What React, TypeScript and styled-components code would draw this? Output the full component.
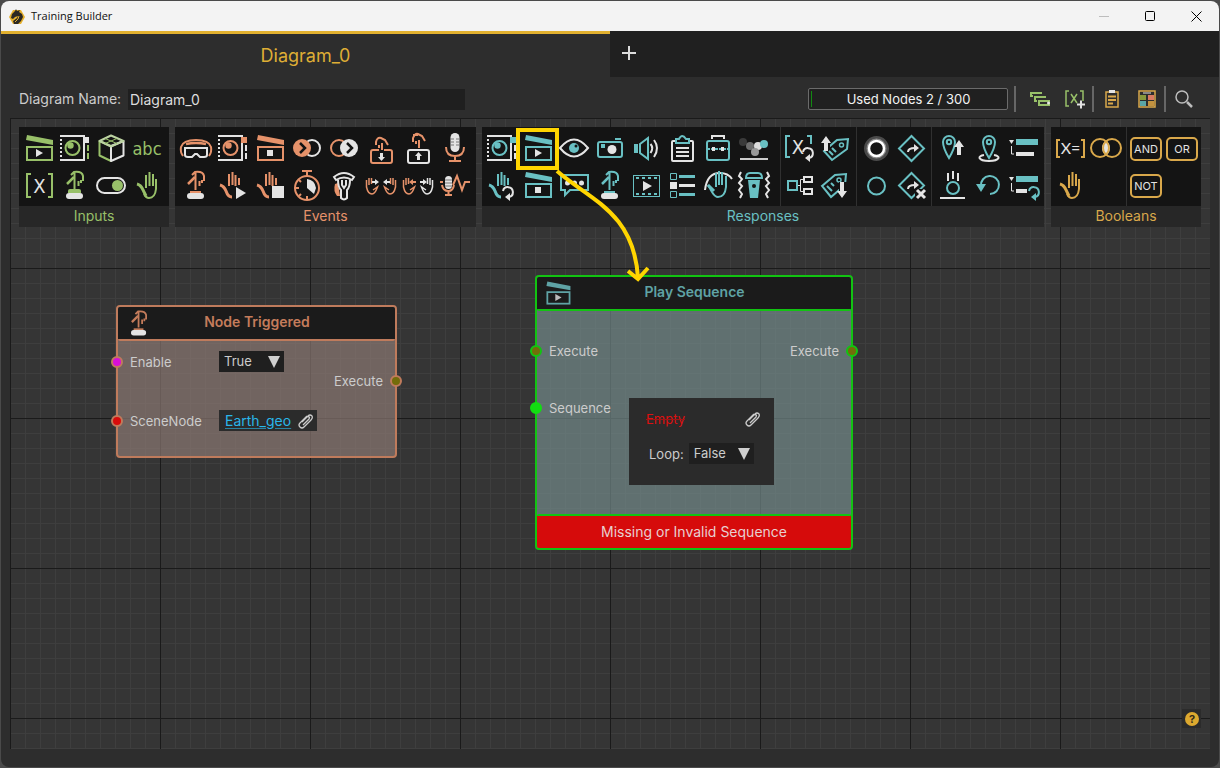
import React from "react";
import styled, { createGlobalStyle } from "styled-components";

const GREEN = "#98c069";
const ORANGE = "#e6926a";
const TEAL = "#69c0c3";
const GOLD = "#d9a84b";
const WHITE = "#e4e4e4";
const INK = "#141414";

const GlobalStyle = createGlobalStyle`
  * { box-sizing: border-box; }
  body {
    margin: 0;
    background: #4a4a4a;
    font-family: Inter, "Open Sans", sans-serif;
    font-size: 13px;
    line-height: 20px;
    color: #cccccc;
  }
  button, input, select { font: inherit; color: inherit; }
`;

const Window = styled.div`
  display: flex;
  flex-direction: column;
  min-height: calc(100vh - 2px);
  margin: 1px;
  background: #2d2d2d;
  border-radius: 8px;
  overflow: hidden;
`;

const TitleBar = styled.header`
  display: flex;
  align-items: center;
  height: 30px;
  padding-left: 8px;
  background: #f3f3f3;
  color: #111111;
`;

const AppTitle = styled.h1`
  flex: 1;
  margin: 0 0 0 6px;
  font: 400 11px/16px "Open Sans", "Noto Sans", sans-serif;
`;

const WindowButton = styled.button<{ $dim?: boolean }>`
  display: grid;
  place-items: center;
  width: 46px;
  height: 30px;
  padding: 0;
  border: 0;
  background: none;
  color: ${(p) => (p.$dim ? "#bdbdbd" : "#000000")};
`;

const TabBar = styled.nav`
  display: flex;
  height: 46px;
  background: #202020;
`;

const Tab = styled.button`
  flex: 0 0 50%;
  padding: 0;
  border: 0;
  border-top: 3px solid #e2b12f;
  background: #2d2d2d;
  color: #dfae35;
  font-size: 18px;
  line-height: 24px;
`;

const AddTab = styled.button`
  display: grid;
  place-items: center;
  width: 38px;
  height: 44px;
  padding: 0;
  border: 0;
  background: none;
  color: #dcdcdc;
`;

const Toolbar = styled.div`
  display: flex;
  align-items: center;
  height: 41px;
  padding: 3px 20px 0 18px;
`;

const NameField = styled.label`
  display: flex;
  align-items: center;
  gap: 7px;
  flex: 0 1 446px;
  font-size: 14px;
`;

const NameCaption = styled.span`
  width: 102px;
  white-space: nowrap;
`;

const NameInput = styled.input`
  flex: 1;
  min-width: 0;
  height: 21px;
  padding: 0 2px;
  border: 0;
  background: #1f1f1f;
  color: #dddddd;
`;

const Usage = styled.div`
  width: 200px;
  height: 22px;
  margin-left: auto;
  padding: 2px;
  border: 1px solid #6b6b6b;
  border-radius: 2px;
  background: #202020;
`;

const UsageFill = styled.div`
  height: 16px;
  border-left: 1px solid #128a12;
  color: #f2f2f2;
  line-height: 17px;
  text-align: center;
`;

const Divider = styled.span<{ $lead?: boolean }>`
  width: 2px;
  height: 26px;
  margin: ${(p) => (p.$lead ? "0 8px 0 6px" : "0 2px")};
  background: #666666;
`;

const Tools = styled.div`
  display: flex;
  align-items: center;
`;

const ToolButton = styled.button`
  display: grid;
  place-items: center;
  width: 31px;
  height: 26px;
  padding: 0;
  border: 0;
  background: none;
`;

const ToolPair = styled.div`
  display: flex;
  gap: 4px;
`;

const Canvas = styled.main`
  position: relative;
  flex: 1;
  margin: 0 9px 18px;
  min-height: 500px;
  background-color: #353535;
  background-image:
    linear-gradient(#1a1a1a 1px, transparent 1px),
    linear-gradient(90deg, #1a1a1a 1px, transparent 1px),
    linear-gradient(#3e3e3e 1px, transparent 1px),
    linear-gradient(90deg, #3e3e3e 1px, transparent 1px);
  background-size: 150px 150px, 150px 150px, 15px 15px, 15px 15px;
`;

const Palette = styled.div`
  display: flex;
  flex-wrap: wrap;
  gap: 6px;
  padding: 9px;
  > :last-child { margin-left: auto; }
`;

const Group = styled.section`
  background: #272727;
`;

const GroupBody = styled.div`
  display: flex;
  height: 79px;
  background: ${INK};
`;

const GroupName = styled.h2<{ $color: string }>`
  margin: 0;
  padding-bottom: 2px;
  color: ${(p) => p.$color};
  font-size: 14px;
  font-weight: 400;
  line-height: 19px;
  text-align: center;
`;

const Cells = styled.div<{ $columns: number; $width: number; $inset: number; $gap?: number; $ruled?: boolean }>`
  display: grid;
  grid-template-columns: repeat(${(p) => p.$columns}, 36px);
  grid-auto-rows: 36px;
  gap: 1px ${(p) => p.$gap ?? 0}px;
  width: ${(p) => p.$width}px;
  padding: 3px 0 0 ${(p) => p.$inset}px;
  border-left: ${(p) => (p.$ruled ? "1px solid #303030" : "0")};
`;

const IconButton = styled.button`
  width: 36px;
  height: 36px;
  padding: 0;
  border: 0;
  background: none;
  svg { display: block; }
`;

const Node = styled.article<{ $x: number; $y: number; $width: number; $edge: string; $fill: string }>`
  position: absolute;
  left: ${(p) => p.$x}px;
  top: ${(p) => p.$y}px;
  width: ${(p) => p.$width}px;
  border: 2px solid ${(p) => p.$edge};
  border-radius: 4px;
  background: ${(p) => p.$fill};
`;

const NodeHeader = styled.header<{ $edge: string; $color: string }>`
  display: grid;
  grid-template-columns: 34px 1fr 38px;
  align-items: center;
  height: 34px;
  padding-left: 5px;
  border-bottom: 2px solid ${(p) => p.$edge};
  border-radius: 2px;
  background: #1b1b1b;
  color: ${(p) => p.$color};
`;

const NodeTitle = styled.h3`
  margin: 0;
  padding-bottom: 2px;
  font-size: 14px;
  font-weight: 600;
  text-align: center;
`;

const NodeBody = styled.div<{ $height: number }>`
  display: flex;
  justify-content: space-between;
  height: ${(p) => p.$height}px;
`;

const PortList = styled.div<{ $top: number; $gap?: number }>`
  display: flex;
  flex-direction: column;
  gap: ${(p) => p.$gap ?? 0}px;
  padding-top: ${(p) => p.$top}px;
`;

const PortRow = styled.div<{ $out?: boolean }>`
  display: flex;
  align-items: flex-start;
  height: 22px;
  margin: ${(p) => (p.$out ? "0 -7px 0 0" : "0 0 0 -7px")};
`;

const Port = styled.span<{ $color: string; $edge: string }>`
  width: 12px;
  height: 12px;
  margin: 5px 0;
  border: 2px solid ${(p) => p.$edge};
  border-radius: 50%;
  background: ${(p) => p.$color};
`;

const PortName = styled.span<{ $width?: number }>`
  width: ${(p) => (p.$width ? `${p.$width}px` : "auto")};
  margin: 0 7px;
  line-height: 22px;
`;

const SelectBox = styled.span`
  display: grid;
  width: 65px;
  height: 21px;
  background: #1f1f1f;
  > * { grid-area: 1 / 1; }
  svg {
    align-self: center;
    justify-self: end;
    margin-right: 4px;
    pointer-events: none;
  }
`;

const Select = styled.select`
  appearance: none;
  width: 65px;
  height: 21px;
  padding: 0 5px;
  border: 0;
  background: none;
  line-height: 21px;
`;

const Reference = styled.span`
  display: flex;
  align-items: center;
  gap: 6px;
  height: 21px;
  padding: 0 2px 0 6px;
  background: #2b2b2b;
`;

const SceneLink = styled.a`
  color: #29b6ea;
  font-size: 14px;
  text-decoration: underline #2a82a0;
  text-underline-offset: 2px;
`;

const SequenceCard = styled.div`
  display: flex;
  flex-direction: column;
  gap: 14px;
  width: 145px;
  height: 87px;
  margin-top: 1px;
  padding: 10px 12px 0 17px;
  background: #2b2b2b;
`;

const CardRow = styled.div`
  display: flex;
  align-items: center;
  justify-content: space-between;
  height: 21px;
`;

const LoopField = styled.label`
  display: flex;
  align-items: center;
  gap: 5px;
  padding-left: 3px;
`;

const Missing = styled.s`
  color: #de1010;
  text-decoration-color: #a01414;
  text-decoration-thickness: 1px;
`;

const ErrorBar = styled.footer<{ $edge: string }>`
  height: 34px;
  border-top: 2px solid ${(p) => p.$edge};
  border-radius: 2px;
  background: #d60b0b;
  color: #e8d0d0;
  font-size: 14px;
  line-height: 31px;
  text-align: center;
`;

const ClipButton = styled.button`
  display: grid;
  place-items: center;
  width: 18px;
  height: 18px;
  padding: 0;
  border: 0;
  background: none;
`;

const Annotation = styled.svg`
  position: absolute;
  left: 0;
  top: 0;
  pointer-events: none;
`;

const HelpButton = styled.button`
  position: absolute;
  right: 9px;
  bottom: 21px;
  display: grid;
  place-items: center;
  width: 19px;
  height: 19px;
  padding: 0;
  border: 0;
  background: #2b2b2b;
`;

/* ---- icon drawings, all on a 36 x 36 board ---- */

type Tint = { c: string };

const Board = ({ children, size = 36 }: { children: React.ReactNode; size?: number }) => (
  <svg width={size} height={size} viewBox="0 0 36 36" fill="none" strokeWidth="2" aria-hidden="true">
    {children}
  </svg>
);

const GLYPH = '"DejaVu Sans Condensed", "DejaVu Sans", sans-serif';

const Clapper = ({ c, stop, w = WHITE }: Tint & { stop?: boolean; w?: string }) => (
  <>
    <path d="M6 5 32 10V15L5 10Z" fill={c} />
    <rect x="6" y="17" width="25" height="13" stroke={c} />
    {stop ? <rect x="15" y="20" width="6" height="6" fill={w} /> : <path d="M15 19 22 23 15 27Z" fill={w} />}
  </>
);

const EyeFrame = ({ c, flag, dash }: Tint & { flag: string; dash: string }) => (
  <>
    <path d="M5 6H27V30H5" stroke={WHITE} />
    <path d="M4 5V31" stroke={WHITE} strokeDasharray="2 2" />
    <circle cx="15.500" cy="18" r="7" stroke={c} />
    <circle cx="13.500" cy="15.500" r="3.200" fill={c} />
    <rect x="26" y="7" width="6" height="6" fill={flag} />
    <path d="M31 15V21M31 23V29" stroke={dash} />
  </>
);

const Cube = ({ c }: Tint) => (
  <g strokeLinejoin="round">
    <path d="M18 16V31L6.500 25.500V11Z" stroke={c} />
    <path d="M18 16V31L30.500 25.500V11Z" stroke={WHITE} />
    <path d="M18 5.500 30.500 11 18 16.500 6.500 11Z" stroke="#bcd3a2" />
    <path d="M12 8.500 24 13.500M24 8.500 12 13.500" stroke={c} strokeWidth="1" />
  </g>
);

const Hand = ({ c }: Tint) => (
  <>
    <path d="M17 8V21M20.500 5V19M24 7V19" stroke={c} />
    <path d="M27 12V22Q26 31 20 31Q17 31 15 27" stroke={c} />
    <path d="M8 17Q12 18 14 23L17 29" stroke={c} strokeWidth="3" />
  </>
);

const CutHand = ({ c }: Tint) => (
  <>
    <path d="M14 7V19M17.500 5V18M20.500 8V19M24 11V18" stroke={c} />
    <path d="M5 18Q9 19 11 24Q13 30 17 30" stroke={c} strokeWidth="3" />
  </>
);

const Press = ({ c, plate }: Tint & { plate?: boolean }) => (
  <>
    <path d="M10 17 17 10" stroke={c} strokeWidth="2.500" />
    <path d="M14 8 17 5Q25 4 26 9V14M17.500 5V23M21.500 14V19M24 13V16" stroke={c} />
    {plate && <path d="M11 26V24Q11 22 13 22H22Q24 22 24 24V26Z" fill={c} />}
    {!plate && <path d="M12 25H23" stroke={c} />}
    <rect x="9" y="26" width="17" height="6" rx="3" fill={WHITE} />
  </>
);

const Bracketed = ({ c, text }: Tint & { text: string }) => (
  <>
    <path d="M10 7H6V30H10M27 7H31V30H27" stroke={c} />
    <text x="18.500" y="26" textAnchor="middle" fontFamily={GLYPH} fontSize="20" fill={WHITE}>{text}</text>
  </>
);

const Turn = ({ c, x, y }: Tint & { x: number; y: number }) => (
  <g transform={`translate(${x} ${y})`}>
    <path d="M-5 -1A5 5 0 1 1 1 5" stroke={c} />
    <path d="M2 1V9L-3 5Z" fill={c} />
  </g>
);

const ArrowUp = ({ c, x, y }: Tint & { x: number; y: number }) => (
  <path d={`M${x} ${y}l5 7h-3v8h-4v-8h-3Z`} fill={c} />
);

const ArrowDown = ({ c, x, y }: Tint & { x: number; y: number }) => (
  <path d={`M${x} ${y}l5 -7h-3v-9h-4v9h-3Z`} fill={c} />
);

const Headset = ({ c }: Tint) => (
  <>
    <path d="M5 26Q2 22 3 17Q5 10 18 10Q31 10 33 17Q34 22 31 26" stroke={c} />
    <path d="M8 14Q18 12 28 14" stroke={c} strokeWidth="2.500" />
    <path d="M7 18H29V25Q29 27 26 27H22L19 24H17L14 27H10Q7 27 7 25Z" stroke={WHITE} />
  </>
);

const Chain = ({ c, back }: Tint & { back?: boolean }) => (
  <>
    <circle cx={back ? 13 : 23} cy="18" r="8" stroke={back ? c : WHITE} />
    <circle cx={back ? 23 : 13} cy="18" r="9" fill={back ? WHITE : c} />
    <path d={back ? "M21 13 26 18 21 23" : "M11 13 16 18 11 23"} stroke={INK} strokeWidth="2.500" />
  </>
);

const BoxMove = ({ c, up }: Tint & { up?: boolean }) => (
  <>
    <rect x="8" y="20" width="21" height="13" rx="2" stroke={up ? WHITE : c} />
    {!up && <path d="M16 20H21" stroke={INK} strokeWidth="3" />}
    {up ? (
      <path d="M13 12V8Q15 3 18 4L22 6 25 11M16 11V14M19 10V18M13 5H18" stroke={c} />
    ) : (
      <path d="M13 15V12Q14 7 18 8L22 10 25 15M16 15V18M19 13V20" stroke={c} />
    )}
    <path d={up ? "M18.500 22 22 26H20V30H17V26H15Z" : "M18.500 31 22 27H20V23H17V27H15Z"} fill={WHITE} />
  </>
);

const Microphone = ({ c }: Tint) => (
  <>
    <rect x="13.500" y="3" width="9" height="19" rx="4.500" fill={WHITE} />
    <path d="M13 9H17M19 9H23M13 12H17M19 12H23M13 15H17M19 15H23" stroke="#777777" strokeWidth="1" />
    <path d="M9 17Q9 26 18 26Q27 26 27 17M18 26V31M12 31H24" stroke={c} />
  </>
);

const Stopwatch = ({ c }: Tint) => (
  <>
    <circle cx="18" cy="21" r="12" stroke={c} strokeWidth="2" />
    <path d="M13 4H23M18 4V9M18 29V33M6 21H10M10 13 12 15M10 29 12 27" stroke={c} />
    <path d="M18 12Q26 13 27 21L25 27 18 21Z" fill={WHITE} />
  </>
);

const Torch = ({ c }: Tint) => (
  <>
    <path d="M9 17 12 16 14 29H11Q7 24 9 17Z" fill={c} />
    <path d="M8 10Q18 2 28 10L26 13Q18 8 10 13Z" stroke={WHITE} />
    <path d="M12 13Q12 20 15 23V31Q18 34 21 31V23Q24 20 24 13M16 13V18L18 21 20 18V13" stroke={WHITE} />
  </>
);

const TwoHands = ({ c, apart }: Tint & { apart?: boolean }) => {
  const palm = "M3.500 13V20Q5 27 9 27Q12 27 14.500 20L10 23M6 11V18M8.500 11V17";
  const inward = "M9 14H12V12L16 15 12 18V16H9Z";
  const outward = "M16 14H13V12L9 15 13 18V16H16Z";
  return (
    <g strokeWidth="1.500">
      <path d={palm} stroke={c} />
      <path d={apart ? outward : inward} fill={apart ? c : WHITE} />
      <g transform="translate(36 0) scale(-1 1)">
        <path d={palm} stroke={apart ? WHITE : c} />
        <path d={apart ? outward : inward} fill={WHITE} />
      </g>
    </g>
  );
};

const Voice = ({ c }: Tint) => (
  <>
    <rect x="8" y="9" width="7" height="13" rx="3.500" fill={WHITE} />
    <path d="M8 13H15M8 16H15M8 19H15" stroke="#777777" strokeWidth="1" />
    <path d="M5 18Q6 24 11.500 24Q16 24 17 18M11.500 24V28M8 28H15M3 15H6" stroke={c} />
    <path d="M16 18 20 9 25 23 28 15H33" stroke={c} />
  </>
);

const Eye = ({ c }: Tint) => (
  <>
    <path d="M4 18Q18 1 32 18Q18 35 4 18Z" stroke={WHITE} />
    <circle cx="18" cy="18" r="5" fill={c} />
    <circle cx="20" cy="16" r="1.500" fill={INK} />
  </>
);

const Camera = ({ c }: Tint) => (
  <>
    <rect x="6" y="12" width="24" height="15" rx="2" stroke={c} />
    <path d="M23 9H29" stroke={c} />
    <rect x="9" y="14" width="4" height="4" fill={c} />
    <circle cx="20" cy="19.500" r="4.500" fill={WHITE} />
  </>
);

const Speaker = ({ c }: Tint) => (
  <>
    <rect x="6" y="14" width="4" height="9" fill={c} />
    <path d="M12 14 20 8V29L12 23Z" stroke={c} />
    <path d="M22.500 14Q26 18 22.500 23M26 10Q32 18 26 27" stroke={WHITE} />
  </>
);

const Clipboard = ({ c }: Tint) => (
  <>
    <rect x="8" y="11" width="21" height="20" rx="1" stroke={WHITE} />
    <path d="M12 13V9H15Q18 3 22 9H25V13Z" stroke={c} fill={INK} />
    <path d="M12 18H25M12 22H25M12 26H25" stroke={WHITE} />
  </>
);

const Briefcase = ({ c }: Tint) => (
  <>
    <path d="M12 9V6H24V9" stroke={WHITE} />
    <rect x="7" y="11" width="22" height="19" rx="2" stroke={c} />
    <path d="M7 19H29" stroke={c} strokeDasharray="3 1" />
    <path d="M12 17H15V21H12ZM21 17H24V21H21Z" fill={WHITE} />
  </>
);

const Bounce = ({ c }: Tint) => (
  <>
    <circle cx="7" cy="12" r="4" fill="#3a3a3a" />
    <circle cx="14" cy="16" r="4" fill="#6e6e6e" />
    <circle cx="22" cy="16" r="4" fill="#dddddd" />
    <circle cx="19" cy="22" r="4" fill="#999999" />
    <circle cx="28" cy="14" r="4" fill={c} />
    <path d="M4 29H32" stroke="#cccccc" />
  </>
);

const Speech = ({ c }: Tint) => (
  <>
    <path d="M5 8H32V23H14L9 28V23H5Z" stroke={c} />
    <circle cx="11.500" cy="16" r="2.500" fill={WHITE} />
    <circle cx="18.500" cy="16" r="2.500" fill={WHITE} />
    <circle cx="25.500" cy="16" r="2.500" fill={WHITE} />
  </>
);

const Film = ({ c }: Tint) => (
  <>
    <rect x="5.500" y="8.500" width="26" height="21" stroke={c} strokeWidth="1" />
    <path d="M8 11H30M8 27H30" stroke={c} strokeDasharray="3 3" />
    <path d="M15 14 24 19 15 24Z" fill={WHITE} />
  </>
);

const Checklist = ({ c }: Tint) => (
  <>
    <path d="M6.500 6.500H12.500V12.500H6.500ZM6.500 24.500H12.500V30.500H6.500Z" stroke={c} strokeWidth="1" />
    <rect x="6" y="15" width="7" height="7" fill={WHITE} />
    <path d="M15 9.500H31M15 27.500H31" stroke={c} strokeWidth="3" />
    <path d="M15 18.500H31" stroke={WHITE} strokeWidth="3" />
  </>
);

const Wave = ({ c }: Tint) => (
  <>
    <path d="M5 23Q7 6 20 6Q28 6 32 12" stroke={WHITE} />
    <path d="M16 6V20M19 4V18M22 5V18" stroke={c} />
    <path d="M26 9V20Q25 30 18 30Q15 30 12 25L8 18" stroke={c} />
    <path d="M8 18 14 24" stroke={c} strokeWidth="3" />
  </>
);

const Shake = ({ c }: Tint) => (
  <>
    <path d="M5 5 3 9 6 12 3 16 6 19 3 23 6 27 4 31M31 5 33 9 30 12 33 16 30 19 33 23 30 27 32 31" stroke={WHITE} />
    <path d="M10 11Q10 6 14 6H22Q26 6 26 11Z" stroke={c} />
    <path d="M12 13H24L22 31H14Z" fill={c} />
    <circle cx="18" cy="19" r="2" fill={INK} />
  </>
);

const VariableTurn = ({ c }: Tint) => (
  <>
    <path d="M9 6H5V27H9M26 6H30V14" stroke={c} />
    <text x="17" y="24" textAnchor="middle" fontFamily={GLYPH} fontSize="20" fill={WHITE}>X</text>
    <Turn c={WHITE} x={27} y={23} />
  </>
);

const Tag = ({ c, down }: Tint & { down?: boolean }) => (
  <>
    {down ? (
      <path d="M5 19 18 8 29 7 28 18 14 30ZM10 19 15 24M14 16 17 19" stroke={c} />
    ) : (
      <path d="M7 21 20 10 31 9 30 19 15 30ZM12 21 16 25M15 18 19 22" stroke={c} />
    )}
    <circle cx={down ? 22 : 24.5} cy={down ? 13 : 15} r="2" stroke={c} strokeWidth="1.500" />
    <path d={down ? "M22 15H31V30H22Z" : "M5 5H13V20H5Z"} fill={INK} />
    {down ? <ArrowDown c={WHITE} x={25} y={31} /> : <ArrowUp c={WHITE} x={9} y={6} />}
  </>
);

const Branch = ({ c }: Tint) => (
  <>
    <rect x="7" y="14" width="9" height="9" stroke={c} />
    <path d="M17 18.500H20M22 12.500H19.500V24.500H22" stroke={WHITE} strokeWidth="1" />
    <path d="M23 10H31V15H23ZM23 22H31V27H23Z" stroke={WHITE} />
  </>
);

const Halo = () => (
  <>
    <circle cx="18.500" cy="18.500" r="10" stroke="#4a4a4a" strokeWidth="5" />
    <circle cx="18.500" cy="18.500" r="9" stroke="#8a8a8a" />
    <circle cx="18.500" cy="18.500" r="7.500" stroke="#ffffff" strokeWidth="2.500" />
  </>
);

const Ring = ({ c }: Tint) => <circle cx="18.500" cy="19" r="8.500" stroke={c} />;

const Diamond = ({ c, cancel }: Tint & { cancel?: boolean }) => (
  <>
    <path d="M17.500 6 30 18.500 17.500 31 5 18.500Z" stroke={c} />
    <path d="M14 22Q14 18 21 18" stroke={WHITE} />
    <path d="M20 14 25 18 20 22Z" fill={WHITE} />
    {cancel && <path d="M21 22H32V33H21Z" fill={INK} />}
    {cancel && <path d="M23 23 31 31M31 23 23 31" stroke={WHITE} strokeWidth="3" />}
  </>
);

const Pin = ({ c, x }: Tint & { x: number }) => (
  <g transform={`translate(${x} 0)`}>
    <path d="M0 28Q-6 18 -6 12A6 6 0 0 1 6 12Q6 18 0 28Z" stroke={c} />
    <circle cx="0" cy="12" r="2.200" stroke={c} />
  </g>
);

const PinUp = ({ c }: Tint) => (
  <>
    <Pin c={c} x={15} />
    <ArrowUp c={WHITE} x={25} y={10} />
  </>
);

const PinRing = ({ c }: Tint) => (
  <>
    <path d="M14 25Q9 26 9.500 28Q11 31 19 31Q27 31 28.500 28Q29 26 24 25" stroke={WHITE} />
    <Pin c={c} x={19} />
  </>
);

const Drop = ({ c, repeat }: Tint & { repeat?: boolean }) => (
  <>
    <path d="M3 10H8L5.500 14Z" fill={WHITE} />
    <path d="M5.500 16V24H8" stroke={WHITE} strokeWidth="1" />
    <rect x="10" y="9" width="22" height="6" fill={c} />
    <rect x="10" y="22" width={repeat ? 11 : 18} height="4" fill={WHITE} />
    {repeat && <Turn c={c} x={28} y={25} />}
  </>
);

const Land = ({ c }: Tint) => (
  <>
    <circle cx="19" cy="21" r="6" stroke={c} />
    <path d="M14 6V14M19 4V12M24 6V14M6 31H31" stroke={WHITE} />
  </>
);

const Undo = ({ c }: Tint) => (
  <>
    <path d="M11 19A9 9 0 1 1 20 27" stroke={c} />
    <path d="M6 17H16L11 25Z" fill={c} />
  </>
);

const VariableEquals = ({ c }: Tint) => (
  <>
    <path d="M8 10H5V27H8M29 10H32V27H29" stroke={c} />
    <text x="18.500" y="24" textAnchor="middle" fontFamily="Lato, sans-serif" fontSize="16" fill={WHITE}>X=</text>
  </>
);

const Venn = ({ c }: Tint) => (
  <>
    <path d="M18 10Q26 18 18 26Q10 18 18 10Z" fill={WHITE} />
    <circle cx="12" cy="18" r="9" stroke={c} />
    <circle cx="24" cy="18" r="9" stroke={c} />
  </>
);

const Gate = ({ c, text }: Tint & { text: string }) => (
  <>
    <rect x="3" y="8" width="30" height="22" rx="4" stroke={c} />
    <text x="18" y="23" textAnchor="middle" fontFamily="Inter, sans-serif" fontSize="11" fill={WHITE}>{text}</text>
  </>
);

const Toggle = ({ c }: Tint) => (
  <>
    <rect x="4" y="11" width="28" height="15" rx="7.500" stroke={WHITE} />
    <circle cx="24.500" cy="18.500" r="5.500" fill={c} />
  </>
);

const Letters = ({ c }: Tint) => (
  <text x="18" y="25" textAnchor="middle" fontFamily={GLYPH} fontSize="18" fill={c}>abc</text>
);

type Item = [name: string, drawing: React.ReactNode];

const inputs: Item[] = [
  ["Sequence input", <Clapper c={GREEN} />],
  ["View input", <EyeFrame c={GREEN} flag={WHITE} dash={GREEN} />],
  ["Object input", <Cube c={GREEN} />],
  ["Text input", <Letters c={GREEN} />],
  ["Variable input", <Bracketed c={GREEN} text="X" />],
  ["Trigger input", <Press c={GREEN} plate />],
  ["Toggle input", <Toggle c={GREEN} />],
  ["Hand input", <Hand c={GREEN} />],
];

const events: Item[] = [
  ["Headset", <Headset c={ORANGE} />],
  ["View changed", <EyeFrame c={ORANGE} flag={ORANGE} dash={WHITE} />],
  ["Sequence ended", <Clapper c={ORANGE} stop />],
  ["Enter", <Chain c={ORANGE} />],
  ["Exit", <Chain c={ORANGE} back />],
  ["Placed", <BoxMove c={ORANGE} />],
  ["Removed", <BoxMove c={ORANGE} up />],
  ["Voice", <Microphone c={ORANGE} />],
  ["Node triggered", <Press c={ORANGE} />],
  ["Grab started", <><CutHand c={ORANGE} /><path d="M21 20 31 26 21 32Z" fill={WHITE} /></>],
  ["Grab ended", <><CutHand c={ORANGE} /><rect x="20" y="19" width="12" height="12" fill={WHITE} /></>],
  ["Timer", <Stopwatch c={ORANGE} />],
  ["Tool used", <Torch c={ORANGE} />],
  ["Hands together", <TwoHands c={ORANGE} />],
  ["Hands apart", <TwoHands c={ORANGE} apart />],
  ["Voice level", <Voice c={ORANGE} />],
];

const actions: Item[] = [
  ["Change view", <EyeFrame c={TEAL} flag={TEAL} dash={WHITE} />],
  ["Play sequence", <Clapper c={TEAL} />],
  ["Visibility", <Eye c={TEAL} />],
  ["Screenshot", <Camera c={TEAL} />],
  ["Play sound", <Speaker c={TEAL} />],
  ["Clipboard", <Clipboard c={TEAL} />],
  ["Toolbox", <Briefcase c={TEAL} />],
  ["Animate", <Bounce c={TEAL} />],
  ["Reset grab", <><CutHand c={TEAL} /><Turn c={WHITE} x={24} y={25} /></>],
  ["Stop sequence", <Clapper c={TEAL} stop />],
  ["Message", <Speech c={TEAL} />],
  ["Trigger", <Press c={TEAL} />],
  ["Play video", <Film c={TEAL} />],
  ["Checklist", <Checklist c={TEAL} />],
  ["Gesture", <Wave c={TEAL} />],
  ["Vibrate", <Shake c={TEAL} />],
];

const variables: Item[] = [
  ["Set variable", <VariableTurn c={TEAL} />],
  ["Tag up", <Tag c={TEAL} />],
  ["Branch", <Branch c={TEAL} />],
  ["Tag down", <Tag c={TEAL} down />],
];

const marks: Item[] = [
  ["Highlight", <Halo />],
  ["Show direction", <Diamond c={TEAL} />],
  ["Clear highlight", <Ring c={TEAL} />],
  ["Hide direction", <Diamond c={TEAL} cancel />],
];

const moves: Item[] = [
  ["Move to pin", <PinUp c={TEAL} />],
  ["Place pin", <PinRing c={TEAL} />],
  ["Attach", <Drop c={TEAL} />],
  ["Drop to ground", <Land c={TEAL} />],
  ["Undo", <Undo c={TEAL} />],
  ["Reattach", <Drop c={TEAL} repeat />],
];

const tests: Item[] = [
  ["Compare variable", <VariableEquals c={GOLD} />],
  ["Overlap", <Venn c={GOLD} />],
  ["Is held", <Hand c={GOLD} />],
];

const gates: Item[] = [
  ["AND", <Gate c={GOLD} text="AND" />],
  ["OR", <Gate c={GOLD} text="OR" />],
  ["NOT", <Gate c={GOLD} text="NOT" />],
];

const IconSet = ({ items }: { items: Item[] }) => (
  <>
    {items.map(([name, drawing]) => (
      <IconButton key={name} aria-label={name}>
        <Board>{drawing}</Board>
      </IconButton>
    ))}
  </>
);

const DropMark = () => (
  <svg width="12" height="12" viewBox="0 0 12 12" aria-hidden="true">
    <path d="M0 0H12L6 12Z" fill="#cfcfcf" />
  </svg>
);

const PaperClip = () => (
  <svg width="16" height="16" viewBox="0 0 16 16" fill="none" stroke="#cccccc" strokeWidth="1.300" aria-hidden="true">
    <path d="M4 9 10 3Q12 1 14 3Q15 5 13 7L6 14Q4 16 2 14Q0 12 2 10L9 3M5 12 11 6Q12 4 11 4Q10 3 9 4L4 9" />
  </svg>
);

const Logo = () => (
  <svg width="16" height="17" viewBox="0 0 16 17" aria-hidden="true">
    <path d="M4 2H12L16 9 12 16H4L0 9Z" fill="#e5b02d" />
    <path d="M3 6 6 3 7 1 8 3 11 2 10 4 13 6 14 9 12 13 9 16 5 16 4 13 8 10 9 8 6 9 4 11 2 10Z" fill="#2b2823" />
    <path d="M6 14 9 11 10 8" stroke="#e5b02d" fill="none" />
  </svg>
);

const NODE_ORANGE = "#bf7b5c";
const NODE_GREEN = "#12c312";

export default function App() {
  return (
    <>
      <GlobalStyle />
      <Window>
        <TitleBar>
          <Logo />
          <AppTitle>Training Builder</AppTitle>
          <WindowButton aria-label="Minimize" $dim>
            <svg width="10" height="10" fill="none" stroke="currentColor"><path d="M0 5.500H10" /></svg>
          </WindowButton>
          <WindowButton aria-label="Maximize">
            <svg width="10" height="10" fill="none" stroke="currentColor"><rect x="0.500" y="0.500" width="9" height="9" rx="1" /></svg>
          </WindowButton>
          <WindowButton aria-label="Close">
            <svg width="11" height="11" fill="none" stroke="currentColor"><path d="M0.500 0.500 10.500 10.500M10.500 0.500 0.500 10.500" /></svg>
          </WindowButton>
        </TitleBar>

        <TabBar>
          <Tab>Diagram_0</Tab>
          <AddTab aria-label="New diagram">
            <svg width="14" height="14" stroke="currentColor" strokeWidth="2"><path d="M0 7H14M7 0V14" /></svg>
          </AddTab>
        </TabBar>

        <Toolbar>
          <NameField>
            <NameCaption>Diagram Name:</NameCaption>
            <NameInput defaultValue="Diagram_0" />
          </NameField>
          <Usage><UsageFill>Used Nodes 2 / 300</UsageFill></Usage>
          <Tools>
            <Divider $lead />
            <ToolPair>
              <ToolButton aria-label="Arrange nodes">
                <svg width="20" height="16" fill="none" stroke={GREEN} strokeWidth="2">
                  <path d="M3 5H1V2H11V3M7 10H5V6H15V7" />
                  <path d="M9 10H19V14H9Z" />
                  <circle cx="18.500" cy="12" r="1.500" fill={WHITE} stroke="none" />
                </svg>
              </ToolButton>
              <ToolButton aria-label="Add variable">
                <svg width="20" height="20" fill="none" stroke={GREEN} strokeWidth="1.500">
                  <path d="M4 2H1V17H4M15 2H18V12" />
                  <path d="M6 5 12 14M12 5 6 14" />
                  <path d="M12 15.500H20M16 11.500V19.500" stroke={WHITE} strokeWidth="2" />
                </svg>
              </ToolButton>
            </ToolPair>
            <Divider />
            <ToolPair>
              <ToolButton aria-label="Notes">
                <svg width="14" height="18" fill="none" stroke={GOLD} strokeWidth="1.500">
                  <path d="M1 2H13V17H1Z" />
                  <path d="M3 6.500H11M3 10H11M3 13.500H8" strokeWidth="2" />
                  <path d="M4 1.500H10" stroke={WHITE} strokeWidth="3" />
                </svg>
              </ToolButton>
              <ToolButton aria-label="Node library">
                <svg width="18" height="18" fill="none">
                  <path d="M1 1H17V17H1Z" stroke={GOLD} strokeWidth="1.500" />
                  <path d="M5 3H13" stroke={WHITE} />
                  <path d="M2 5H8V10H2Z" fill="#87993b" />
                  <path d="M10 5H16V10H10Z" fill="#d97a62" />
                  <path d="M2 11H8V16H2Z" fill="#5aa6a6" />
                  <path d="M10 11H16V16H10Z" fill="#c3923f" />
                </svg>
              </ToolButton>
            </ToolPair>
            <Divider />
            <ToolButton aria-label="Search">
              <svg width="18" height="18" fill="none" stroke="#bdbdbd">
                <circle cx="7" cy="7" r="6" strokeWidth="1.500" />
                <path d="M12 12 17 17" strokeWidth="2.500" />
              </svg>
            </ToolButton>
          </Tools>
        </Toolbar>

        <Canvas>
          <Palette>
            <Group>
              <GroupBody>
                <Cells $columns={4} $width={150} $inset={2}><IconSet items={inputs} /></Cells>
              </GroupBody>
              <GroupName $color={GREEN}>Inputs</GroupName>
            </Group>
            <Group>
              <GroupBody>
                <Cells $columns={8} $width={301} $inset={3} $gap={1}><IconSet items={events} /></Cells>
              </GroupBody>
              <GroupName $color={ORANGE}>Events</GroupName>
            </Group>
            <Group>
              <GroupBody>
                <Cells $columns={8} $width={298} $inset={2}><IconSet items={actions} /></Cells>
                <Cells $columns={2} $width={76} $inset={0} $ruled><IconSet items={variables} /></Cells>
                <Cells $columns={2} $width={75} $inset={1} $ruled><IconSet items={marks} /></Cells>
                <Cells $columns={3} $width={113} $inset={2} $ruled><IconSet items={moves} /></Cells>
              </GroupBody>
              <GroupName $color={TEAL}>Responses</GroupName>
            </Group>
            <Group>
              <GroupBody>
                <Cells $columns={2} $width={75} $inset={1}><IconSet items={tests} /></Cells>
                <Cells $columns={2} $width={75} $inset={1} $ruled><IconSet items={gates} /></Cells>
              </GroupBody>
              <GroupName $color={GOLD}>Booleans</GroupName>
            </Group>
          </Palette>

          <Node $x={106} $y={187} $width={281} $edge={NODE_ORANGE} $fill="rgba(141, 122, 116, 0.680)">
            <NodeHeader $edge={NODE_ORANGE} $color="#c47c5b">
              <Board size={32}><Press c="#c47c5b" /></Board>
              <NodeTitle>Node Triggered</NodeTitle>
            </NodeHeader>
            <NodeBody $height={115}>
              <PortList $top={10} $gap={37}>
                <PortRow>
                  <Port $color="#d80fd8" $edge={NODE_ORANGE} />
                  <PortName as="label" htmlFor="enable" $width={82}>Enable</PortName>
                  <SelectBox>
                    <Select id="enable" defaultValue="True"><option>True</option><option>False</option></Select>
                    <DropMark />
                  </SelectBox>
                </PortRow>
                <PortRow>
                  <Port $color="#d80b0b" $edge={NODE_ORANGE} />
                  <PortName $width={82}>SceneNode</PortName>
                  <Reference>
                    <SceneLink href="#earth">Earth_geo</SceneLink>
                    <ClipButton aria-label="Attach scene node"><PaperClip /></ClipButton>
                  </Reference>
                </PortRow>
              </PortList>
              <PortList $top={29}>
                <PortRow $out>
                  <PortName>Execute</PortName>
                  <Port $color="#736c0a" $edge={NODE_ORANGE} />
                </PortRow>
              </PortList>
            </NodeBody>
          </Node>

          <Node $x={525} $y={157} $width={318} $edge={NODE_GREEN} $fill="rgba(116, 140, 140, 0.680)">
            <NodeHeader $edge={NODE_GREEN} $color="#5fa3a5">
              <Board size={32}><Clapper c="#5fa3a5" w="#bbbbbb" /></Board>
              <NodeTitle>Play Sequence</NodeTitle>
            </NodeHeader>
            <NodeBody $height={203}>
              <PortList $top={29} $gap={35}>
                <PortRow>
                  <Port $color="#736c0a" $edge={NODE_GREEN} />
                  <PortName>Execute</PortName>
                </PortRow>
                <PortRow>
                  <Port $color="#12dd12" $edge="#12dd12" />
                  <PortName $width={73}>Sequence</PortName>
                  <SequenceCard>
                    <CardRow>
                      <Missing>Empty</Missing>
                      <ClipButton aria-label="Attach sequence"><PaperClip /></ClipButton>
                    </CardRow>
                    <CardRow>
                      <LoopField>
                        Loop:
                        <SelectBox>
                          <Select defaultValue="False"><option>True</option><option>False</option></Select>
                          <DropMark />
                        </SelectBox>
                      </LoopField>
                    </CardRow>
                  </SequenceCard>
                </PortRow>
              </PortList>
              <PortList $top={29}>
                <PortRow $out>
                  <PortName>Execute</PortName>
                  <Port $color="#736c0a" $edge={NODE_GREEN} />
                </PortRow>
              </PortList>
            </NodeBody>
            <ErrorBar $edge={NODE_GREEN}>Missing or Invalid Sequence</ErrorBar>
          </Node>

          <Annotation width="860" height="200" viewBox="0 0 860 200" fill="none" stroke="#ffd500" strokeWidth="4" aria-hidden="true">
            <rect x="508" y="12" width="39" height="38" />
            <path d="M547 53C580 82 624 94 628 160M618 153 628 161 638 150" />
          </Annotation>

          <HelpButton aria-label="Help">
            <svg width="14" height="14" aria-hidden="true">
              <circle cx="7" cy="7" r="7" fill="#dda92f" />
              <text x="7" y="11" textAnchor="middle" fontFamily="Inter, sans-serif" fontWeight="700" fontSize="11" fill="#332b1a">?</text>
            </svg>
          </HelpButton>
        </Canvas>
      </Window>
    </>
  );
}
